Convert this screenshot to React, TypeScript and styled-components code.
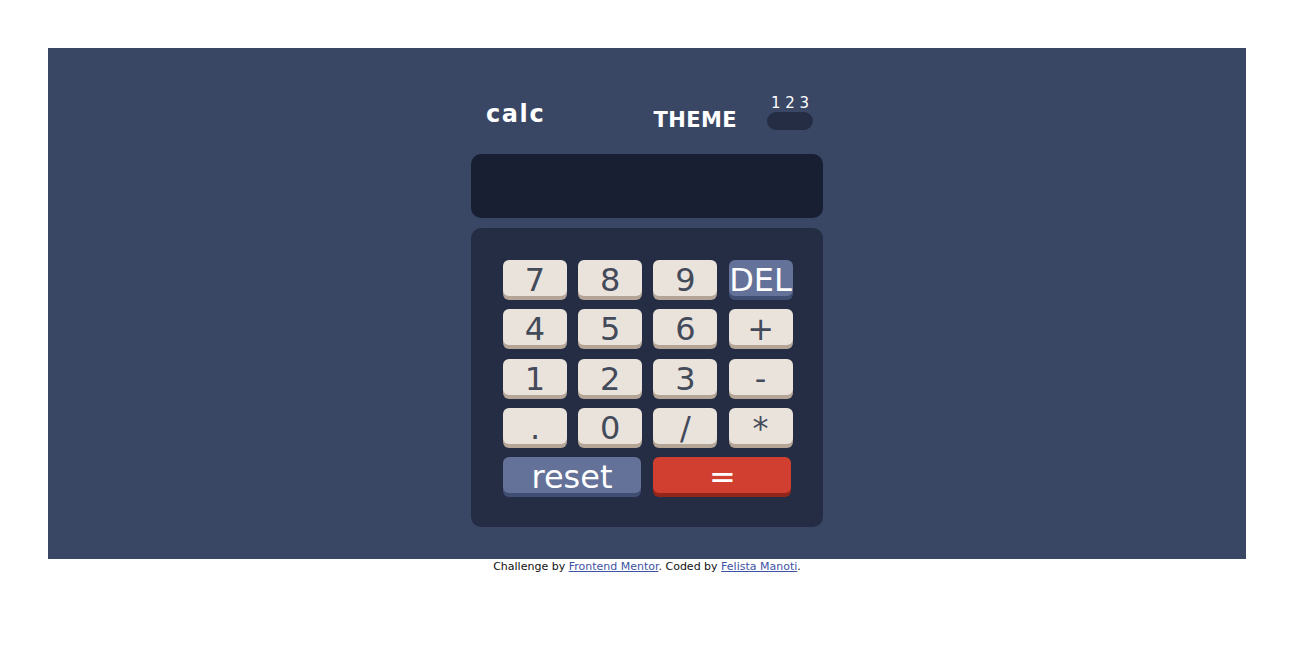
import React from "react";
import styled, { createGlobalStyle } from "styled-components";

const GlobalStyle = createGlobalStyle`
  body {
    margin: 8px;
    font-family: "DejaVu Sans", "Noto Sans", sans-serif;
    background: #ffffff;
  }
`;

const Page = styled.div`
  margin: 40px;
`;

const Panel = styled.main`
  background: #3a4764;
  height: 511px;
  box-sizing: border-box;
  padding-top: 45px;
`;

const Calculator = styled.div`
  width: 352px;
  margin: 0 auto;
`;

const Header = styled.header`
  display: flex;
  align-items: center;
  justify-content: space-between;
  padding: 0 10px 0 15px;
  color: #ffffff;
`;

const Logo = styled.h1`
  margin: 4px 0 0;
  font-size: 24px;
  font-weight: 700;
  letter-spacing: 1.6px;
`;

const ThemeGroup = styled.div`
  display: flex;
  align-items: flex-end;
  gap: 30px;
`;

const ThemeLabel = styled.span`
  font-size: 21px;
  font-weight: 700;
  letter-spacing: 0.4px;
  margin-bottom: -2px;
`;

const ToggleColumn = styled.div`
  display: flex;
  flex-direction: column;
  align-items: center;
`;

const ToggleNumbers = styled.span`
  font-size: 15px;
  padding-top: 1px;
`;

const Toggle = styled.div`
  width: 46px;
  height: 18px;
  border-radius: 9px;
  background: #242d44;
`;

const Screen = styled.div`
  margin-top: 24px;
  height: 64px;
  border-radius: 10px;
  background: #181f32;
`;

const Keypad = styled.div`
  margin-top: 10px;
  background: #242d44;
  border-radius: 10px;
  padding: 32px 30px 34px 32px;
  display: grid;
  grid-template-columns: repeat(4, 64px);
  grid-auto-rows: 36px;
  column-gap: 11.2px;
  row-gap: 13.25px;
`;

type Variant = "num" | "del" | "reset" | "eq";

const palette: Record<Variant, { bg: string; shadow: string; color: string }> = {
  num: { bg: "#eae3dc", shadow: "#b4a597", color: "#434a59" },
  del: { bg: "#647198", shadow: "#414e73", color: "#ffffff" },
  reset: { bg: "#647198", shadow: "#414e73", color: "#ffffff" },
  eq: { bg: "#d03f2f", shadow: "#93261a", color: "#ffffff" },
};

const Key = styled.button<{ $variant: Variant; $wide?: boolean }>`
  border: none;
  box-sizing: border-box;
  padding: 4px 0 0;
  margin: 0;
  height: 36px;
  width: ${(p) => (p.$wide ? "138px" : "64px")};
  grid-column: ${(p) => (p.$wide ? "span 2" : "auto")};
  border-radius: 6px;
  font-family: "DejaVu Sans", sans-serif;
  font-size: 32px;
  line-height: 32px;
  white-space: nowrap;
  overflow: visible;
  display: flex;
  align-items: center;
  justify-content: center;
  background: ${(p) => palette[p.$variant].bg};
  color: ${(p) => palette[p.$variant].color};
  box-shadow: 0 4px 0 ${(p) => palette[p.$variant].shadow};
  cursor: pointer;
`;

const Footer = styled.footer`
  padding-top: 1px;
  text-align: center;
  font-size: 11px;
  color: #111111;
`;

const Link = styled.a`
  color: #3e52a3;
`;

const keys: { label: string; variant: Variant }[] = [
  { label: "7", variant: "num" },
  { label: "8", variant: "num" },
  { label: "9", variant: "num" },
  { label: "DEL", variant: "del" },
  { label: "4", variant: "num" },
  { label: "5", variant: "num" },
  { label: "6", variant: "num" },
  { label: "+", variant: "num" },
  { label: "1", variant: "num" },
  { label: "2", variant: "num" },
  { label: "3", variant: "num" },
  { label: "-", variant: "num" },
  { label: ".", variant: "num" },
  { label: "0", variant: "num" },
  { label: "/", variant: "num" },
  { label: "*", variant: "num" },
];

export default function App() {
  return (
    <>
      <GlobalStyle />
      <Page>
        <Panel>
          <Calculator>
            <Header>
              <Logo>calc</Logo>
              <ThemeGroup>
                <ThemeLabel>THEME</ThemeLabel>
                <ToggleColumn>
                  <ToggleNumbers>1 2 3</ToggleNumbers>
                  <Toggle />
                </ToggleColumn>
              </ThemeGroup>
            </Header>
            <Screen />
            <Keypad>
              {keys.map((k) => (
                <Key key={k.label} $variant={k.variant}>
                  {k.label}
                </Key>
              ))}
              <Key $variant="reset" $wide>
                reset
              </Key>
              <Key $variant="eq" $wide>
                =
              </Key>
            </Keypad>
          </Calculator>
        </Panel>
        <Footer>
          Challenge by <Link href="#">Frontend Mentor</Link>. Coded by{" "}
          <Link href="#">Felista Manoti</Link>.
        </Footer>
      </Page>
    </>
  );
}
